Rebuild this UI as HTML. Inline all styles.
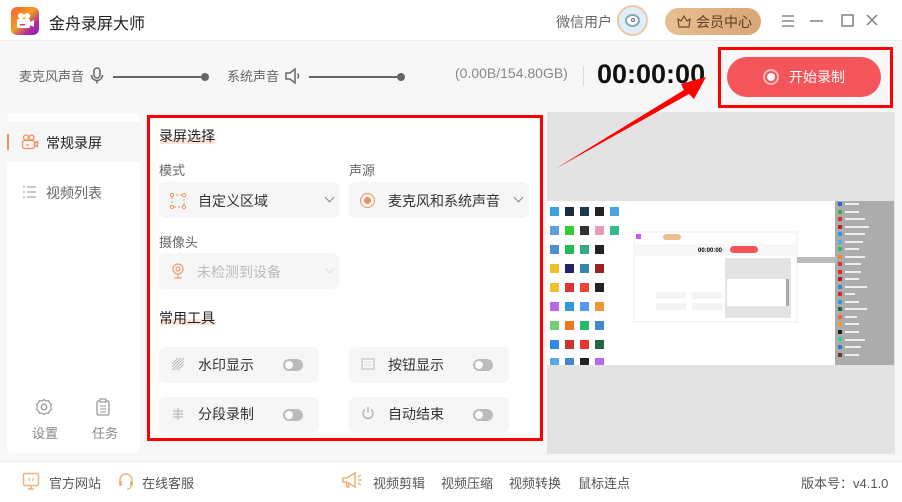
<!DOCTYPE html>
<html><head><meta charset="utf-8"><style>
*{margin:0;padding:0;box-sizing:border-box}
body{width:902px;height:502px;overflow:hidden;background:#f7f7f7;font-family:"Liberation Sans","Noto Sans CJK SC",sans-serif;position:relative;color:#333}
.a{position:absolute}
.t{font-size:13px;color:#666;white-space:nowrap}
.sel{position:absolute;background:#f6f6f6;border-radius:6px;height:36px}
.tool{position:absolute;background:#f6f6f6;border-radius:6px;width:160px;height:36px}
.tog{position:absolute;width:20px;height:12px;border-radius:6px;background:#bbb;right:16px;top:12px}
.tog:after{content:"";position:absolute;left:2px;top:2px;width:8px;height:8px;border-radius:50%;background:#fff}
.chev{position:absolute;width:7px;height:7px;border-right:1.5px solid #888;border-bottom:1.5px solid #888;transform:rotate(45deg)}
</style></head><body>
<div class="a" style="left:0;top:0;width:902px;height:41px;background:#fff;border-bottom:1px solid #ececec"></div>
<div class="a" style="left:11px;top:7px;width:28px;height:28px;border-radius:6px;background:linear-gradient(135deg,#ff5a3c 0%,#f0a020 45%,#b02aa0 75%,#7a2ad0 100%)"></div>
<svg class="a" style="left:15px;top:11px" width="22" height="20" viewBox="0 0 22 20"><circle cx="6" cy="5" r="3" fill="#fff"/><circle cx="12" cy="5" r="3" fill="#fff"/><rect x="2" y="8" width="13" height="9" rx="1.5" fill="#fff"/><path d="M15 11l4-2v7l-4-2z" fill="#fff"/><rect x="5" y="13" width="5" height="1.5" fill="#d04080"/></svg>
<div class="a" style="left:49px;top:10px;font-size:16px;color:#222">金舟录屏大师</div>
<div class="a t" style="left:556px;top:12px;font-size:14px">微信用户</div>
<div class="a" style="left:617px;top:5px;width:31px;height:31px;border-radius:50%;background:#dfeef8;border:2px solid #f0c8a0"></div>
<div class="a" style="left:625px;top:14px;width:15px;height:13px;border-radius:50%;background:#fff;border:2px solid #8aa"></div>
<div class="a" style="left:631px;top:18px;width:4px;height:4px;border-radius:50%;border:1px solid #667"></div>
<div class="a" style="left:665px;top:8px;width:96px;height:27px;border-radius:14px;background:linear-gradient(90deg,#e9bf92,#d9a574)"></div>
<svg class="a" style="left:676px;top:13px" width="16" height="16" viewBox="0 0 16 16"><path d="M2 6l3 2 3-5 3 5 3-2-1 8H3z" fill="none" stroke="#6b4a2a" stroke-width="1.2"/></svg>
<div class="a" style="left:696px;top:12px;font-size:14px;color:#5a3e22">会员中心</div>
<svg class="a" style="left:780px;top:12px" width="100" height="18" viewBox="0 0 100 18"><path d="M2 4h12M2 9h12M2 14h12" stroke="#888" stroke-width="1.4"/><path d="M30 9h13" stroke="#777" stroke-width="1.4"/><rect x="62" y="3" width="11" height="11" fill="none" stroke="#777" stroke-width="1.4"/><path d="M91 3l10 10M101 3l-10 10" stroke="#777" stroke-width="1.4" transform="translate(-4,0)"/></svg>
<div class="a t" style="left:19px;top:66px">麦克风声音</div>
<svg class="a" style="left:89px;top:66px" width="16" height="20" viewBox="0 0 16 20"><rect x="5" y="2" width="6" height="10" rx="3" fill="none" stroke="#666" stroke-width="1.5"/><path d="M2.5 9a5.5 5.5 0 0 0 11 0M8 14.5v3" fill="none" stroke="#666" stroke-width="1.5"/></svg>
<div class="a" style="left:113px;top:76px;width:92px;height:2px;background:#666"></div>
<div class="a" style="left:201px;top:73px;width:8px;height:8px;border-radius:50%;background:#666"></div>
<div class="a t" style="left:227px;top:66px">系统声音</div>
<svg class="a" style="left:284px;top:67px" width="18" height="18" viewBox="0 0 18 18"><path d="M2 6h4l5-4v14l-5-4H2z" fill="none" stroke="#666" stroke-width="1.5"/><path d="M13.5 6.5a3.5 3.5 0 0 1 0 5" fill="none" stroke="#666" stroke-width="1.5"/></svg>
<div class="a" style="left:309px;top:76px;width:92px;height:2px;background:#666"></div>
<div class="a" style="left:397px;top:73px;width:8px;height:8px;border-radius:50%;background:#666"></div>
<div class="a t" style="left:455px;top:65px;font-size:14px;color:#888">(0.00B/154.80GB)</div>
<div class="a" style="left:583px;top:66px;width:1px;height:20px;background:#ddd"></div>
<div class="a" style="left:597px;top:59px;font-size:27px;font-weight:bold;color:#111">00:00:00</div>
<div class="a" style="left:718px;top:47px;width:175px;height:61px;border:3px solid #f00"></div>
<div class="a" style="left:727px;top:57px;width:154px;height:40px;border-radius:20px;background:#f4555b"></div>
<div class="a" style="left:763px;top:69px;width:16px;height:16px;border-radius:50%;border:2px solid #fbb;background:#f4555b"></div>
<div class="a" style="left:767px;top:73px;width:8px;height:8px;border-radius:50%;background:#fff"></div>
<div class="a" style="left:789px;top:67px;font-size:14px;color:#fff">开始录制</div>
<div class="a" style="left:7px;top:113px;width:133px;height:340px;background:#fff;border-radius:6px"></div>
<div class="a" style="left:7px;top:122px;width:133px;height:40px;background:#f6f6f6"></div>
<div class="a" style="left:7px;top:134px;width:2px;height:16px;background:#f0905a"></div>
<svg class="a" style="left:21px;top:134px" width="18" height="16" viewBox="0 0 18 16"><circle cx="5" cy="3.5" r="2.5" fill="none" stroke="#f0905a" stroke-width="1.3"/><circle cx="10.5" cy="3.5" r="2.5" fill="none" stroke="#f0905a" stroke-width="1.3"/><rect x="1.5" y="6.5" width="12" height="8" rx="2" fill="none" stroke="#f0905a" stroke-width="1.3"/><path d="M13.5 9l3-1.5v5l-3-1.5" fill="none" stroke="#f0905a" stroke-width="1.3"/><path d="M5 11h3" stroke="#f0905a" stroke-width="1.2"/></svg>
<div class="a" style="left:46px;top:133px;font-size:14px;color:#222">常规录屏</div>
<svg class="a" style="left:22px;top:185px" width="15" height="14" viewBox="0 0 15 14"><path d="M1 2h2M1 7h2M1 12h2M5 2h9M5 7h9M5 12h9" stroke="#aaa" stroke-width="1.3"/></svg>
<div class="a" style="left:46px;top:183px;font-size:14px;color:#666">视频列表</div>
<svg class="a" style="left:35px;top:398px" width="18" height="18" viewBox="0 0 18 18"><circle cx="9" cy="9" r="2.8" fill="none" stroke="#999" stroke-width="1.3"/><path d="M9 1.5l2 1.5 2.5-.3 1 2.3 2 1.5-.8 2.5.8 2.5-2 1.5-1 2.3-2.5-.3-2 1.5-2-1.5-2.5.3-1-2.3-2-1.5.8-2.5-.8-2.5 2-1.5 1-2.3 2.5.3z" fill="none" stroke="#999" stroke-width="1.2"/></svg>
<div class="a" style="left:32px;top:423px;font-size:13px;color:#888">设置</div>
<svg class="a" style="left:95px;top:398px" width="16" height="18" viewBox="0 0 16 18"><rect x="2" y="3" width="12" height="14" rx="1.5" fill="none" stroke="#999" stroke-width="1.3"/><rect x="5" y="1" width="6" height="3" fill="#fff" stroke="#999" stroke-width="1.2"/><path d="M5 8h6M5 11h6M5 14h6" stroke="#999" stroke-width="1.1"/></svg>
<div class="a" style="left:92px;top:423px;font-size:13px;color:#888">任务</div>
<div class="a" style="left:147px;top:115px;width:396px;height:326px;background:#fff;border:3px solid #f00"></div>
<div class="a" style="left:160px;top:138px;width:55px;height:6px;background:#fde3d6"></div>
<div class="a" style="left:159px;top:126px;font-size:14px;color:#222">录屏选择</div>
<div class="a t" style="left:159px;top:160px">模式</div>
<div class="a t" style="left:349px;top:160px">声源</div>
<div class="sel" style="left:159px;top:182px;width:180px"></div>
<svg class="a" style="left:170px;top:193px" width="16" height="16" viewBox="0 0 16 16"><rect x="2" y="2" width="12" height="12" fill="none" stroke="#f0905a" stroke-width="1" stroke-dasharray="2 2"/><circle cx="2" cy="2" r="1.6" fill="#fff" stroke="#f0905a"/><circle cx="14" cy="2" r="1.6" fill="#fff" stroke="#f0905a"/><circle cx="2" cy="14" r="1.6" fill="#fff" stroke="#f0905a"/><circle cx="14" cy="14" r="1.6" fill="#fff" stroke="#f0905a"/></svg>
<div class="a" style="left:198px;top:191px;font-size:14px;color:#333">自定义区域</div>
<div class="chev" style="left:326px;top:194px"></div>
<div class="sel" style="left:349px;top:182px;width:180px"></div>
<div class="a" style="left:360px;top:193px;width:15px;height:15px;border-radius:50%;border:1.5px solid #f0905a"></div>
<div class="a" style="left:364px;top:197px;width:7px;height:7px;border-radius:50%;background:#f0905a"></div>
<div class="a" style="left:388px;top:191px;font-size:14px;color:#333">麦克风和系统声音</div>
<div class="chev" style="left:515px;top:194px"></div>
<div class="a t" style="left:159px;top:232px">摄像头</div>
<div class="sel" style="left:159px;top:253px;width:180px"></div>
<svg class="a" style="left:171px;top:263px" width="14" height="16" viewBox="0 0 14 16"><circle cx="7" cy="6" r="5" fill="none" stroke="#f0a07a" stroke-width="1.3"/><circle cx="7" cy="6" r="2" fill="none" stroke="#f0a07a" stroke-width="1.3"/><path d="M3 15h8M7 11v4" stroke="#f0a07a" stroke-width="1.3"/></svg>
<div class="a" style="left:197px;top:262px;font-size:14px;color:#bbb">未检测到设备</div>
<div class="chev" style="left:326px;top:265px;border-color:#ddd"></div>
<div class="a" style="left:160px;top:319px;width:55px;height:6px;background:#fde3d6"></div>
<div class="a" style="left:159px;top:308px;font-size:14px;color:#222">常用工具</div>
<div class="tool" style="left:159px;top:347px"><div class="tog"></div></div>
<svg class="a" style="left:171px;top:357px" width="14" height="14" viewBox="0 0 14 14"><path d="M1 7l6-6M1 13L13 1M7 13l6-6M1 10l9-9M4 13l9-9" stroke="#bbb" stroke-width="1"/></svg>
<div class="a" style="left:198px;top:355px;font-size:14px;color:#333">水印显示</div>
<div class="tool" style="left:349px;top:347px"><div class="tog"></div></div>
<svg class="a" style="left:361px;top:358px" width="14" height="12" viewBox="0 0 14 12"><rect x="1" y="1" width="12" height="10" fill="none" stroke="#bbb"/><path d="M3 4h8M3 7h8" stroke="#ccc" stroke-dasharray="1 1"/></svg>
<div class="a" style="left:388px;top:355px;font-size:14px;color:#333">按钮显示</div>
<div class="tool" style="left:159px;top:397px"><div class="tog"></div></div>
<svg class="a" style="left:171px;top:407px" width="14" height="14" viewBox="0 0 14 14"><path d="M2 4h10M2 7h10M2 10h10M7 1v12" stroke="#bbb" stroke-width="1.2"/></svg>
<div class="a" style="left:198px;top:404px;font-size:14px;color:#333">分段录制</div>
<div class="tool" style="left:349px;top:397px"><div class="tog"></div></div>
<svg class="a" style="left:361px;top:406px" width="14" height="14" viewBox="0 0 14 14"><path d="M4 3.5a5 5 0 1 0 6 0M7 1v6" fill="none" stroke="#aaa" stroke-width="1.2"/></svg>
<div class="a" style="left:388px;top:404px;font-size:14px;color:#333">自动结束</div>
<div class="a" style="left:547px;top:112px;width:348px;height:342px;background:#e3e3e3"></div>
<div class="a" style="left:547px;top:201px;width:288px;height:164px;background:#fff"></div>
<div class="a" style="left:835px;top:201px;width:59px;height:164px;background:#acacac"></div>
<svg class="a" style="left:547px;top:201px" width="348" height="164">
<g>
<rect x="3" y="6" width="9" height="9" fill="#3aa0e0"/><rect x="18" y="6" width="9" height="9" fill="#1a2a40"/><rect x="33" y="6" width="9" height="9" fill="#1a3a50"/><rect x="48" y="6" width="9" height="9" fill="#222"/><rect x="63" y="6" width="9" height="9" fill="#4aa0e0"/>
<rect x="3" y="25" width="9" height="9" fill="#5aa0e0"/><rect x="18" y="25" width="9" height="9" fill="#3c3"/><rect x="33" y="25" width="9" height="9" fill="#333"/><rect x="48" y="25" width="9" height="9" fill="#e9b"/><rect x="63" y="25" width="9" height="9" fill="#3b8"/>
<rect x="3" y="44" width="9" height="9" fill="#4a90d0"/><rect x="18" y="44" width="9" height="9" fill="#2b5"/><rect x="33" y="44" width="9" height="9" fill="#3a8"/><rect x="48" y="44" width="9" height="9" fill="#222"/>
<rect x="3" y="63" width="9" height="9" fill="#f0c030"/><rect x="18" y="63" width="9" height="9" fill="#226"/><rect x="33" y="63" width="9" height="9" fill="#38a"/><rect x="48" y="63" width="9" height="9" fill="#922"/>
<rect x="3" y="82" width="9" height="9" fill="#f0c030"/><rect x="18" y="82" width="9" height="9" fill="#d33"/><rect x="33" y="82" width="9" height="9" fill="#e43"/><rect x="48" y="82" width="9" height="9" fill="#222"/>
<rect x="3" y="101" width="9" height="9" fill="#b6e"/><rect x="18" y="101" width="9" height="9" fill="#39d"/><rect x="33" y="101" width="9" height="9" fill="#59e"/><rect x="48" y="101" width="9" height="9" fill="#e93"/>
<rect x="3" y="120" width="9" height="9" fill="#7c7"/><rect x="18" y="120" width="9" height="9" fill="#e72"/><rect x="33" y="120" width="9" height="9" fill="#2b6"/><rect x="48" y="120" width="9" height="9" fill="#48c"/>
<rect x="3" y="139" width="9" height="9" fill="#38e"/><rect x="18" y="139" width="9" height="9" fill="#c33"/><rect x="33" y="139" width="9" height="9" fill="#e33"/><rect x="48" y="139" width="9" height="9" fill="#264"/>
<rect x="3" y="157" width="9" height="7" fill="#5ae"/><rect x="18" y="157" width="9" height="7" fill="#48c"/><rect x="33" y="157" width="9" height="7" fill="#222"/><rect x="48" y="157" width="9" height="7" fill="#b6e"/>
</g>
<rect x="87" y="31" width="163" height="90" fill="#fff" stroke="#eee"/>
<rect x="87" y="43" width="163" height="12" fill="#f7f7f7"/>
<rect x="89" y="33" width="5" height="5" fill="#c5f"/>
<rect x="116" y="33" width="18" height="6" rx="3" fill="#e9c090"/>
<rect x="183" y="45" width="28" height="7" rx="3.5" fill="#f4555b"/>
<text x="151" y="51" font-size="6" font-weight="bold" font-family="Liberation Sans">00:00:00</text>
<rect x="178" y="57" width="66" height="60" fill="#e3e3e3"/>
<rect x="180" y="78" width="62" height="27" fill="#fff"/>
<rect x="239" y="78" width="3" height="27" fill="#aaa"/>
<rect x="109" y="91" width="30" height="7" fill="#f4f4f4"/><rect x="145" y="91" width="30" height="7" fill="#f4f4f4"/>
<rect x="109" y="102" width="30" height="7" fill="#f4f4f4"/><rect x="145" y="102" width="30" height="7" fill="#f4f4f4"/>
<rect x="250" y="56" width="40" height="6" fill="#bbb"/>
</svg>
<svg class="a" style="left:835px;top:201px" width="59" height="164"><g fill="#fff" opacity=".8"><rect x="10" y="2" width="14" height="2"/><rect x="10" y="10" width="14" height="2"/><rect x="10" y="17" width="20" height="2"/><rect x="10" y="25" width="24" height="2"/><rect x="10" y="32" width="20" height="2"/><rect x="10" y="40" width="18" height="2"/><rect x="10" y="47" width="14" height="2"/><rect x="10" y="55" width="20" height="2"/><rect x="10" y="62" width="16" height="2"/><rect x="10" y="70" width="16" height="2"/><rect x="10" y="77" width="14" height="2"/><rect x="10" y="85" width="22" height="2"/><rect x="10" y="92" width="10" height="2"/><rect x="10" y="100" width="14" height="2"/><rect x="10" y="107" width="22" height="2"/><rect x="10" y="115" width="12" height="2"/><rect x="10" y="122" width="14" height="2"/><rect x="10" y="130" width="14" height="2"/><rect x="10" y="138" width="20" height="2"/><rect x="10" y="145" width="16" height="2"/><rect x="10" y="153" width="14" height="2"/></g><g><rect x="3" y="1" width="4" height="4" fill="#36c"/><rect x="3" y="9" width="4" height="4" fill="#4a4"/><rect x="3" y="16" width="4" height="4" fill="#d33"/><rect x="3" y="24" width="4" height="4" fill="#b22"/><rect x="3" y="31" width="4" height="4" fill="#39e"/><rect x="3" y="39" width="4" height="4" fill="#5ae"/><rect x="3" y="46" width="4" height="4" fill="#3b5"/><rect x="3" y="54" width="4" height="4" fill="#e83"/><rect x="3" y="61" width="4" height="4" fill="#d33"/><rect x="3" y="69" width="4" height="4" fill="#e22"/><rect x="3" y="76" width="4" height="4" fill="#a22"/><rect x="3" y="84" width="4" height="4" fill="#38d"/><rect x="3" y="91" width="4" height="4" fill="#d23"/><rect x="3" y="99" width="4" height="4" fill="#39d"/><rect x="3" y="106" width="4" height="4" fill="#264"/><rect x="3" y="114" width="4" height="4" fill="#e63"/><rect x="3" y="121" width="4" height="4" fill="#e93"/><rect x="3" y="129" width="4" height="4" fill="#222"/><rect x="3" y="136" width="4" height="4" fill="#3c9"/><rect x="3" y="144" width="4" height="4" fill="#37c"/><rect x="3" y="152" width="4" height="4" fill="#733"/></g></svg>
<svg class="a" style="left:0;top:0" width="902" height="502"><polygon points="555,169 684,90 681,84 706,77 694,99 689,94" fill="#f00"/></svg>
<div class="a" style="left:0;top:461px;width:902px;height:41px;background:#fff;border-top:1px solid #eee"></div>
<svg class="a" style="left:22px;top:472px" width="18" height="18" viewBox="0 0 18 18"><rect x="1.5" y="1.5" width="15" height="12" rx="1.5" fill="none" stroke="#eab57f" stroke-width="1.5"/><path d="M6 17h6M9 14v3" stroke="#eab57f" stroke-width="1.5"/><path d="M8 6l-1.5 1.5L8 9M10 6l1.5 1.5L10 9" fill="none" stroke="#eab57f"/></svg>
<div class="a t" style="left:49px;top:473px;color:#555">官方网站</div>
<svg class="a" style="left:117px;top:472px" width="18" height="18" viewBox="0 0 18 18"><path d="M3 10V8a6 6 0 0 1 12 0v2" fill="none" stroke="#eab57f" stroke-width="1.5"/><rect x="2" y="9" width="3" height="5" rx="1" fill="#eab57f"/><rect x="13" y="9" width="3" height="5" rx="1" fill="#eab57f"/><path d="M14 14q0 3-4 3" fill="none" stroke="#eab57f" stroke-width="1.2"/></svg>
<div class="a t" style="left:142px;top:473px;color:#555">在线客服</div>
<svg class="a" style="left:340px;top:469px" width="24" height="22" viewBox="0 0 24 22"><path d="M3 9h4l8-5v14l-8-5H3z" fill="none" stroke="#eab57f" stroke-width="1.6"/><path d="M6 13l1 5h2l-1-5" fill="none" stroke="#eab57f" stroke-width="1.4"/><path d="M18 8l3-2M18 11h4M18 14l3 2" stroke="#eab57f" stroke-width="1.4"/></svg>
<div class="a t" style="left:373px;top:473px;color:#555">视频剪辑</div>
<div class="a t" style="left:441px;top:473px;color:#555">视频压缩</div>
<div class="a t" style="left:509px;top:473px;color:#555">视频转换</div>
<div class="a t" style="left:578px;top:473px;color:#555">鼠标连点</div>
<div class="a t" style="left:801px;top:473px;color:#555">版本号：v4.1.0</div>
</body></html>
